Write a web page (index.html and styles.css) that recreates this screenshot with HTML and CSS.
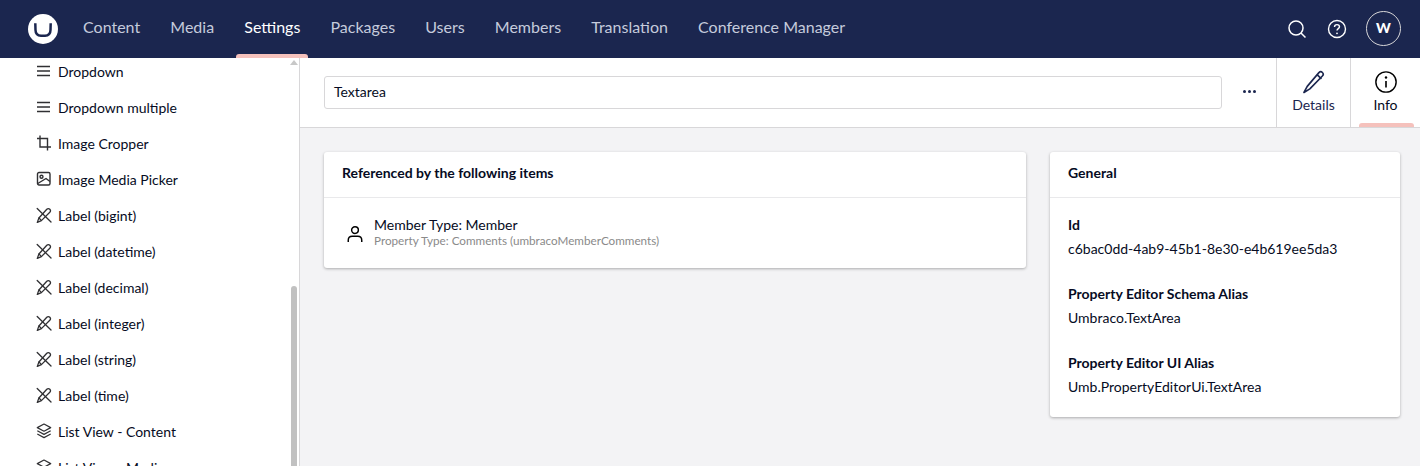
FILE: index.html
```html
<!DOCTYPE html>
<html lang="en">
<head>
<meta charset="utf-8">
<title>Textarea</title>
<link rel="stylesheet" href="styles.css">
</head>
<body>
<svg class="defs" width="0" height="0">
  <symbol id="i-label" viewBox="0 0 16 16"><g fill="none" stroke="currentColor" stroke-width="1.300" stroke-linejoin="round" stroke-linecap="round"><path d="M1.200 1.500 15 15"/><path d="M10.800 2.200c.9-.9 2.200-.9 3 0s.9 2.100 0 3L5.400 13.600 1.300 15.400l1.600-4.400z"/><path d="M3 11l2.300 2.400"/></g></symbol>
</svg>
<header class="topbar">
  <div class="logo"><svg viewBox="0 0 30 30" width="30" height="30"><circle cx="15" cy="15" r="15" fill="#fff"/><path d="M7.300 9.200 7.500 16Q7.600 21.500 13 21.700H17Q22.400 21.500 22.500 16L22.700 9.200" fill="none" stroke="#1b264f" stroke-width="2.500"/></svg></div>
  <nav class="mainnav">
    <a class="navitem">Content</a>
    <a class="navitem">Media</a>
    <a class="navitem active">Settings</a>
    <a class="navitem">Packages</a>
    <a class="navitem">Users</a>
    <a class="navitem">Members</a>
    <a class="navitem">Translation</a>
    <a class="navitem">Conference Manager</a>
  </nav>
  <div class="tools">
    <svg class="tool" viewBox="0 0 20 20" width="20" height="20"><circle cx="9" cy="9" r="7" fill="none" stroke="#fff" stroke-width="1.500"/><path d="M14 14l4.500 4.500" stroke="#fff" stroke-width="1.500"/></svg>
    <svg class="tool tool-last" viewBox="0 0 20 20" width="20" height="20"><circle cx="10" cy="10" r="8.500" fill="none" stroke="#fff" stroke-width="1.400"/><path d="M7.500 8c0-1.500 1.100-2.400 2.500-2.400s2.500.9 2.500 2.200c0 1.800-2.500 1.900-2.500 3.800" fill="none" stroke="#fff" stroke-width="1.400"/><circle cx="10" cy="14.300" r=".9" fill="#fff"/></svg>
    <div class="avatar">W</div>
  </div>
</header>
<div class="body">
  <aside class="sidebar">
    <ul class="tree">
      <li class="row"><svg class="ico" viewBox="0 0 16 16"><path d="M1 3.500h13M1 8h13M1 12.500h13" stroke="currentColor" stroke-width="1.400"/></svg>Dropdown</li>
      <li class="row"><svg class="ico" viewBox="0 0 16 16"><path d="M1 3.500h13M1 8h13M1 12.500h13" stroke="currentColor" stroke-width="1.400"/></svg>Dropdown multiple</li>
      <li class="row"><svg class="ico" viewBox="0 0 16 16"><path d="M4 .5V12h11M1 3.500h10.500V15.500" fill="none" stroke="currentColor" stroke-width="1.400"/></svg>Image Cropper</li>
      <li class="row"><svg class="ico" viewBox="0 0 16 16"><g fill="none" stroke="currentColor" stroke-width="1.400"><rect x="1.500" y="1.500" width="12.500" height="12.500" rx="1.500"/><circle cx="5.500" cy="5.800" r="1.500"/><path d="M1.800 12.500 10 7.500l4 3"/></g></svg>Image Media Picker</li>
      <li class="row"><svg class="ico"><use href="#i-label"/></svg>Label (bigint)</li>
      <li class="row"><svg class="ico"><use href="#i-label"/></svg>Label (datetime)</li>
      <li class="row"><svg class="ico"><use href="#i-label"/></svg>Label (decimal)</li>
      <li class="row"><svg class="ico"><use href="#i-label"/></svg>Label (integer)</li>
      <li class="row"><svg class="ico"><use href="#i-label"/></svg>Label (string)</li>
      <li class="row"><svg class="ico"><use href="#i-label"/></svg>Label (time)</li>
      <li class="row"><svg class="ico" viewBox="0 0 16 16"><g fill="none" stroke="currentColor" stroke-width="1.200" stroke-linejoin="round"><path d="M8 1 1.300 4.600 8 8.200l6.700-3.600z"/><path d="M1.300 7.800 8 11.400l6.700-3.600M1.300 11 8 14.600l6.700-3.600"/></g></svg>List View - Content</li>
      <li class="row"><svg class="ico" viewBox="0 0 16 16"><g fill="none" stroke="currentColor" stroke-width="1.200" stroke-linejoin="round"><path d="M8 1 1.300 4.600 8 8.200l6.700-3.600z"/><path d="M1.300 7.800 8 11.400l6.700-3.600M1.300 11 8 14.600l6.700-3.600"/></g></svg>List View - Media</li>
    </ul>
    <div class="scroll-arrow"></div>
    <div class="scroll-thumb"></div>
  </aside>
  <main class="main">
    <div class="wshead">
      <div class="namebox"><div class="nameinput">Textarea</div></div>
      <div class="more"><span></span><span></span><span></span></div>
      <div class="tab">
        <svg class="tabicon" viewBox="0 0 22 22" width="24" height="24"><g fill="none" stroke="#1b264f" stroke-width="1.500" stroke-linejoin="round"><path d="M15.500 2.400c.9-.9 2.400-.9 3.200-.1.900.9.900 2.300 0 3.200L7.200 17.300 1.800 20.600l3-5.600z"/><path d="M13.800 4.300l4 3.800"/></g></svg>
        <span>Details</span>
      </div>
      <div class="tab tab-active">
        <svg class="tabicon" viewBox="0 0 22 22" width="24" height="24"><circle cx="11" cy="11" r="9.300" fill="none" stroke="#000" stroke-width="1.300"/><path d="M11 10v6" stroke="#000" stroke-width="1.500"/><circle cx="11" cy="6.900" r="1.100" fill="#000"/></svg>
        <span>Info</span>
      </div>
    </div>
    <div class="content">
      <section class="card card-refs">
        <h2 class="cardhead">Referenced by the following items</h2>
        <div class="ref">
          <svg class="refico" viewBox="0 0 14 16" width="16" height="18"><circle cx="7" cy="4.500" r="3" fill="none" stroke="#000" stroke-width="1.300"/><path d="M1 15v-1.500c0-2 1.500-3.500 3.500-3.500h5c2 0 3.500 1.500 3.500 3.500V15" fill="none" stroke="#000" stroke-width="1.300"/></svg>
          <div>
            <div class="reftitle">Member Type: Member</div>
            <div class="refsub">Property Type: Comments (umbracoMemberComments)</div>
          </div>
        </div>
      </section>
      <section class="card card-general">
        <h2 class="cardhead">General</h2>
        <div class="props">
          <div class="prop"><h3>Id</h3><p>c6bac0dd-4ab9-45b1-8e30-e4b619ee5da3</p></div>
          <div class="prop"><h3>Property Editor Schema Alias</h3><p>Umbraco.TextArea</p></div>
          <div class="prop"><h3>Property Editor UI Alias</h3><p>Umb.PropertyEditorUi.TextArea</p></div>
        </div>
      </section>
    </div>
  </main>
</div>
</body>
</html>
```
FILE: styles.css
```css
* { box-sizing: border-box; }
html, body { margin: 0; height: 466px; overflow: hidden; }
body { font-family: Lato, "Open Sans", sans-serif; font-size: 14px; color: #060b23; background: #f3f3f5; display: flex; flex-direction: column; }
.defs { position: absolute; }
.topbar { height: 58px; flex: none; background: #1b264f; display: flex; align-items: center; padding-left: 28px; color: #fff; }
.logo { width: 30px; height: 30px; flex: none; }
.mainnav { display: flex; height: 58px; margin-left: 10px; }
.navitem { position: relative; display: flex; align-items: center; padding: 0 15.070px 5px; font-size: 16px; color: #c5cbdc; }
.navitem.active { color: #fff; }
.navitem.active::after { content: ""; position: absolute; left: 7px; right: 7px; bottom: 0; height: 4px; background: #f5c1bc; border-radius: 3px 3px 0 0; }
.tools { margin-left: auto; display: flex; align-items: center; padding-right: 19px; }
.tool { margin-right: 20px; }
.tool-last { margin-right: 19px; }
.avatar { width: 35px; height: 35px; border: 1.500px solid #d8d7d9; border-radius: 50%; display: flex; align-items: center; justify-content: center; font-weight: 900; font-size: 14px; color: #fff; padding-bottom: 2px; margin-top: -1px; }
.body { flex: 1; display: flex; min-height: 0; }
.sidebar { position: relative; width: 300px; flex: none; background: #fff; border-right: 1px solid #d8d7d9; overflow: hidden; }
.tree { list-style: none; margin: 0; padding: 0 0 0 36px; }
.row { height: 36px; display: flex; align-items: center; gap: 6px; margin-top: -5px; margin-bottom: 5px; }
.ico { width: 16px; height: 16px; flex: none; color: #303033; }
.scroll-arrow { position: absolute; left: 290px; top: 2px; width: 0; height: 0; border-left: 4px solid transparent; border-right: 4px solid transparent; border-bottom: 5px solid #c8c8c8; }
.scroll-thumb { position: absolute; left: 291px; top: 228px; width: 6px; bottom: 0; background: #c1c1c1; border-radius: 3px 3px 0 0; }
.main { flex: 1; min-width: 0; display: flex; flex-direction: column; }
.wshead { height: 70px; flex: none; background: #fff; border-bottom: 1px solid #d8d7d9; display: flex; align-items: stretch; }
.namebox { flex: 1; display: flex; align-items: center; padding-left: 24px; }
.nameinput { width: 100%; height: 33px; border: 1px solid #d8d7d9; border-radius: 3px; padding: 0 9px 2px; display: flex; align-items: center; font-size: 14px; }
.more { width: 54px; flex: none; display: flex; align-items: center; justify-content: center; gap: 2px; padding-bottom: 3px; }
.more span { width: 3px; height: 3px; border-radius: 50%; background: #1b264f; }
.tab { position: relative; flex: none; width: 74px; border-left: 1px solid #d8d7d9; display: flex; flex-direction: column; align-items: center; padding-top: 12px; color: #1b264f; font-size: 14px; }
.tab span { margin-top: 2px; }
.tab-active { width: 70px; color: #060b23; }
.tab-active::after { content: ""; position: absolute; left: 8px; right: 6px; bottom: 0; height: 4px; background: #f5c1bc; border-radius: 3px 3px 0 0; }
.content { display: flex; align-items: flex-start; gap: 24px; padding: 24px 20px 0 24px; }
.card { background: #fff; border-radius: 3px; box-shadow: 0 1px 3px rgba(0,0,0,.3); }
.card-refs { flex: 1; height: 116px; }
.card-general { width: 350px; flex: none; height: 265px; }
.cardhead { margin: 0; height: 46px; border-bottom: 1px solid #e9e9eb; padding: 0 18px 4px; display: flex; align-items: center; font-size: 14px; font-weight: 700; color: #060b23; }
.ref { display: flex; align-items: center; padding: 19px 0 0 23px; gap: 11px; }
.refico { flex: none; margin-top: 3px; }
.reftitle { font-size: 14px; line-height: 16px; }
.refsub { font-size: 11.700px; line-height: 14px; color: #8a8a8a; }
.props { padding: 17px 18px 0; }
.prop { margin-bottom: 25px; }
.prop h3 { margin: 0 0 4px; font-size: 14px; line-height: 20px; font-weight: 700; color: #060b23; }
.prop p { margin: 0; font-size: 14px; line-height: 20px; color: #060b23; }
```
